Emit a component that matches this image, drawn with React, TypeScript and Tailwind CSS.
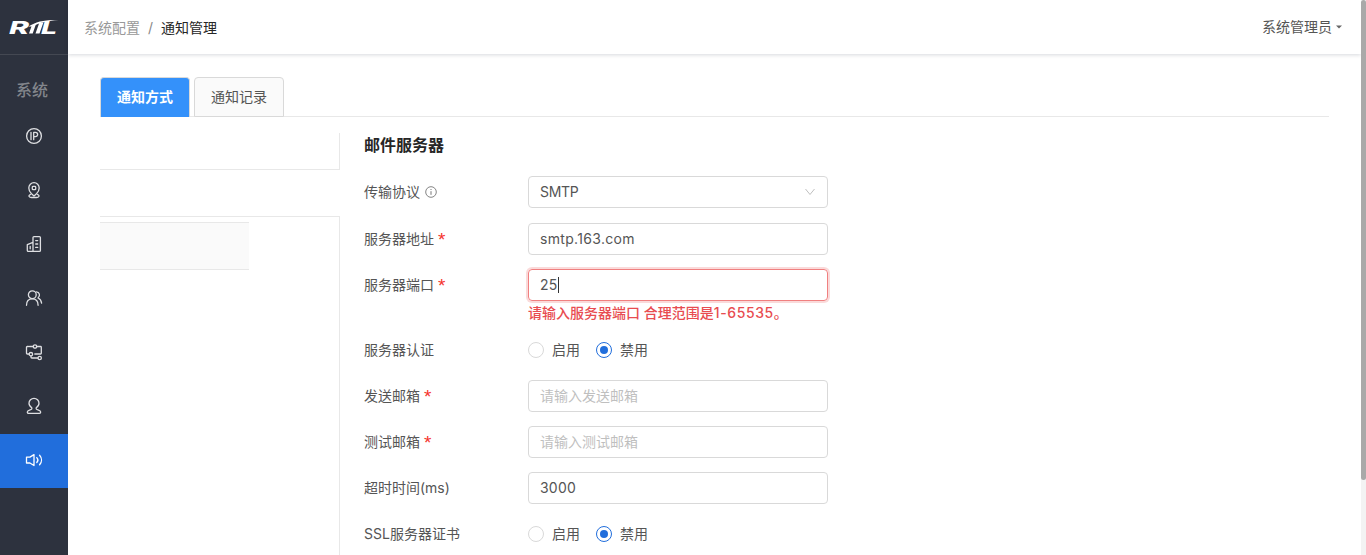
import type { ReactNode } from "react";

function Logo() {
  return (
    <svg width="52" height="24" viewBox="0 0 52 24" fill="#fff" className="block">
      <g fontFamily="Inter, sans-serif" fontWeight="800" fontStyle="italic">
        <text x="0" y="18.500" fontSize="17.500" textLength="20" lengthAdjust="spacingAndGlyphs">R</text>
        <text x="32" y="18.500" fontSize="17.500" textLength="16" lengthAdjust="spacingAndGlyphs">L</text>
      </g>
      <path d="M20 18.500L22.700 10.800L27 9L23.700 18.500ZM26.500 18.500L30.200 8L34.500 7.200L30.500 18.500Z" />
      <path d="M19.500 11.500C27 6.500 36 4.500 49.500 5C39 5.700 30 7.700 23.500 11.500Z" />
    </svg>
  );
}

function Icon({ children }: { children: ReactNode }) {
  return (
    <svg width="18" height="18" viewBox="0 0 18 18" fill="none" stroke="currentColor" strokeWidth="1.3" strokeLinecap="round" strokeLinejoin="round">
      {children}
    </svg>
  );
}

const navIcons: ReactNode[] = [
  <Icon key="ip">
    <circle cx="9" cy="9" r="7.4" />
    <path d="M6 5.3v7.4M8.7 12.7V5.3h1.8a2.1 2.1 0 0 1 0 4.300H8.7" />
  </Icon>,
  <Icon key="pin">
    <path d="M6.500 12.800C4.800 11 3.800 9 3.800 6.900a5.200 5.200 0 0 1 10.400 0c0 2.100-1 4.100-2.700 5.900L9 15z" />
    <rect x="7.300" y="5.300" width="3.400" height="3.400" rx=".8" />
    <path d="M5.500 13.500c-3 1.300-1 3 1 3h5c2 0 4-1.700 1-3" />
  </Icon>,
  <Icon key="building">
    <path d="M8 16.400V2.600c0-.6.400-1 1-1h5.400c.6 0 1 .4 1 1v12.800c0 .6-.4 1-1 1H3.300c-.6 0-1-.4-1-1V9.600L8 7.300M5.200 11.500v2.300M10.700 5.600h2M10.700 9h2M10.700 12.400h2" />
  </Icon>,
  <Icon key="users">
    <circle cx="7.300" cy="5.800" r="3.900" />
    <path d="M1.500 16.300c0-3.800 2.200-6.400 5.800-6.400s5.800 2.600 5.800 6.400M11.300 2.800c3.300.2 4.300 3.900 1.700 6.200 2.100.8 3.300 2.700 3.600 5.200" />
  </Icon>,
  <Icon key="topology">
    <circle cx="10" cy="3.500" r="1.700" />
    <circle cx="5.900" cy="11.200" r="1.700" />
    <circle cx="14.700" cy="15" r="1.700" />
    <path d="M8.100 3.500H4.500M3.500 3.500H2.300c-.5 0-.8.300-.8.800v5.900c0 .5.300.8.800.8h1.700M12 3.500h3.500c.5 0 .8.300.8.800v5.900c0 .5-.3.800-.8.800H9.800M6 13v1.200c0 .5.300.8.800.8h6" />
  </Icon>,
  <Icon key="user">
    <path d="M6.800 10.700C4.900 9.600 4 8.100 4 6.300a5 5 0 0 1 10 0c0 1.800-.9 3.300-2.800 4.400v1.100c.2 1 4.500 1.300 4.500 3.200 0 .8-.5 1.300-1.300 1.300H3.600c-.8 0-1.300-.5-1.300-1.300 0-1.900 4.300-2.200 4.500-3.200z" />
  </Icon>,
  <Icon key="sound">
    <path d="M9 3.600v10.900L4.900 12H1.500V6.100h3.400zM11.800 6.600c1.300 1.400 1.300 3.500 0 4.900M14.600 4.300c2.500 2.800 2.500 6.700 0 9.500" />
  </Icon>,
];

function Field({ label, required, info, children }: { label: string; required?: boolean; info?: boolean; children: ReactNode }) {
  return (
    <div className="flex h-8 items-center">
      <div className="flex w-[164px] shrink-0 items-center whitespace-pre">
        {label}
        {required && <span className="ml-1 pt-0.5 font-['Liberation_Sans',sans-serif] text-[19px] leading-5 text-[#f5322d]">*</span>}
        {info && (
          <svg className="ml-[5px]" width="12" height="12" viewBox="0 0 12 12" fill="none" stroke="#777">
            <circle cx="6" cy="6" r="5.300" strokeWidth=".9" />
            <path d="M6 5.200v3.600M6 3v1" />
          </svg>
        )}
      </div>
      {children}
    </div>
  );
}

const inputClass = "h-8 w-[300px] rounded border border-[#d9d9d9] bg-white px-[11px] pb-0.5 text-sm text-[#555] outline-none placeholder:text-[#bfbfbf]";

function Radios() {
  return (
    <div className="flex items-center">
      <span className="size-4 rounded-full border border-[#d9d9d9]" />
      <span className="ml-2 mr-4">启用</span>
      <span className="flex size-4 items-center justify-center rounded-full border border-[#216edc]">
        <span className="size-2 rounded-full bg-[#216edc]" />
      </span>
      <span className="ml-2">禁用</span>
    </div>
  );
}

export default function App() {
  return (
    <div className="flex h-[555px] w-full overflow-hidden bg-white font-['Inter','Noto_Sans_CJK_SC',sans-serif] text-sm text-[#555]">
      <aside className="flex w-[68px] shrink-0 flex-col bg-[#2d323e]">
        <div className="flex h-[55px] shrink-0 items-center border-b border-[#444852] pl-[9px]">
          <Logo />
        </div>
        <div className="h-[55px] shrink-0 pl-4 pt-[23px] text-base font-medium leading-6 text-[#83868c]">系统</div>
        <nav>
          {navIcons.map((icon, i) => (
            <div key={i} className={`flex h-[54px] items-center justify-center pb-0.5 ${i === 6 ? "bg-[#216edc] text-white" : "text-[#dedfe2]"}`}>
              {icon}
            </div>
          ))}
        </nav>
      </aside>

      <div className="flex min-w-0 flex-1 flex-col">
        <header className="flex h-[54px] shrink-0 items-center justify-between pl-4 pr-[19px] shadow-[0_1px_4px_rgba(0,21,41,0.16)]">
          <div className="flex items-center pt-0.5">
            <span className="text-[#999]">系统配置</span>
            <span className="w-[21px] text-center text-[#888]">/</span>
            <span className="text-[#262626]">通知管理</span>
          </div>
          <div className="flex items-center">
            系统管理员
            <svg className="ml-1" width="6" height="4" viewBox="0 0 6 4" fill="#666">
              <path d="M0 .5h6L3 3.500z" />
            </svg>
          </div>
        </header>

        <main className="flex min-h-0 flex-1 flex-col pl-8 pr-8 pt-[23px]">
          <div className="flex h-10 shrink-0 gap-1 border-b border-[#e8e8e8]">
            <div className="flex h-10 w-[90px] items-center justify-center rounded-t border border-b-0 border-[#d9d9d9] bg-[#3491fa] pb-0.5 font-bold text-white">通知方式</div>
            <div className="flex h-10 w-[90px] items-center justify-center rounded-t border border-[#d9d9d9] bg-[#fafafa]">通知记录</div>
          </div>

          <div className="flex min-h-0 flex-1 pt-4">
            <div className="flex w-60 shrink-0 flex-col">
              <div className="h-[37px] shrink-0 border-b border-r border-[#e8e8e8]" />
              <div className="mt-[46px] flex-1 border-r border-t border-[#e8e8e8] pt-[5px]">
                <div className="h-12 w-[149px] border-y border-[#e8e8e8] bg-[#fafafa]" />
              </div>
            </div>

            <form className="pl-6">
              <h2 className="h-[43px] text-base font-bold leading-[25px] text-[#262626]">邮件服务器</h2>
              <div className="mb-[15px]">
                <Field label="传输协议" info>
                  <div className="flex h-8 w-[300px] items-center justify-between rounded border border-[#d9d9d9] pl-[11px] pr-3">
                    <span className="tracking-[-0.3px]">SMTP</span>
                    <svg width="10" height="8" viewBox="0 0 10 8" fill="none" stroke="#bfbfbf">
                      <path d="M.5 1L5 6.500 9.500 1" />
                    </svg>
                  </div>
                </Field>
              </div>
              <div className="mb-3.5">
                <Field label="服务器地址" required>
                  <input className={`${inputClass} tracking-[0.32px]`} defaultValue="smtp.163.com" />
                </Field>
              </div>
              <Field label="服务器端口" required>
                <div className="flex h-8 w-[300px] items-center rounded border border-[#f08080] pl-[11px] shadow-[0_0_0_2px_rgba(230,70,70,0.2)]">
                  <span className="tracking-[0.3px]">25</span>
                  <span className="h-4 w-px bg-[#333]" />
                </div>
              </Field>
              <div className="h-[33px] pl-[164px] font-medium leading-6 text-[#e84c50]">
                请输入服务器端口 合理范围是<span className="tracking-[0.6px]">1-65535</span>。
              </div>
              <div className="flex flex-col gap-3.5">
                <Field label="服务器认证"><Radios /></Field>
                <Field label="发送邮箱" required>
                  <input className={inputClass} placeholder="请输入发送邮箱" />
                </Field>
                <Field label="测试邮箱" required>
                  <input className={inputClass} placeholder="请输入测试邮箱" />
                </Field>
                <Field label="超时时间(ms)">
                  <input className={`${inputClass} tracking-[0.2px]`} defaultValue="3000" />
                </Field>
                <Field label="SSL服务器证书"><Radios /></Field>
              </div>
            </form>
          </div>
        </main>
      </div>

      <div className="w-[5px] shrink-0 bg-[#f3f3f3]">
        <div className="h-[480px] rounded bg-[#a9a9a9]" />
      </div>
    </div>
  );
}
